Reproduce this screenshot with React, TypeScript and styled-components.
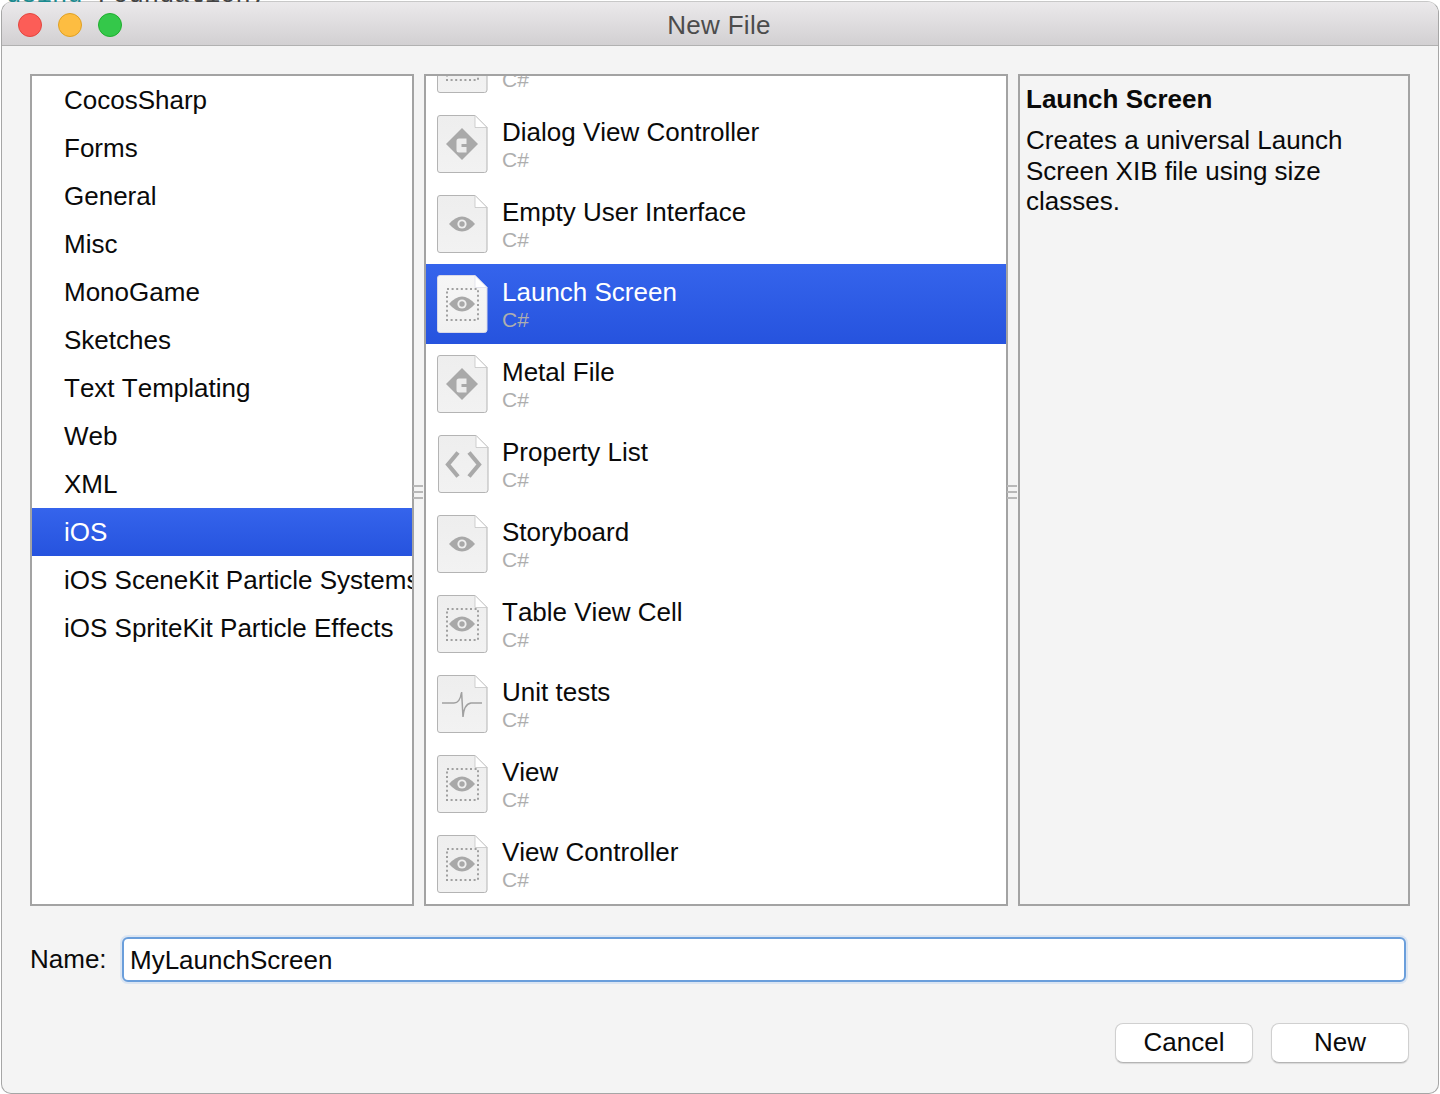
import * as React from 'react';
import styled, { createGlobalStyle } from 'styled-components';

const GlobalStyle = createGlobalStyle`
  html, body {
    margin: 0;
    padding: 0;
    background: #ffffff;
  }
  body {
    font-family: 'Liberation Sans', Arial, sans-serif;
    font-kerning: none;
    color: #0a0a0a;
  }
`;

const Page = styled.div`
  width: 1440px;
  height: 1094px;
  overflow: hidden;
  background: #ffffff;
`;

const BehindCode = styled.div`
  height: 2px;
  margin-bottom: -1px;
  padding-left: 6px;
  overflow: hidden;
  font-family: 'Liberation Mono', monospace;
  font-size: 25.5px;
  line-height: 2px;
  white-space: pre;
  color: #444444;

  & > div {
    margin-top: -5px;
  }

  & span {
    color: #1b8a8f;
  }
`;

const Window = styled.div`
  box-sizing: border-box;
  width: 1438px;
  height: 1093px;
  margin-left: 1px;
  display: flex;
  flex-direction: column;
  background: #f4f4f4;
  border: 1px solid #a6a6a6;
  border-top-color: #c8c8c8;
  border-radius: 12px 12px 10px 10px;
  overflow: hidden;
`;

const TitleBar = styled.div`
  box-sizing: border-box;
  height: 44px;
  flex: none;
  display: grid;
  grid-template-columns: 1fr auto 1fr;
  align-items: center;
  padding: 0 18px 0 16px;
  background: linear-gradient(#ebe9eb, #d2d0d2);
  border-bottom: 1px solid #b1b1b1;
`;

const Lights = styled.div`
  display: flex;
  gap: 16px;
`;

const Light = styled.span<{ $fill: string; $edge: string }>`
  box-sizing: border-box;
  width: 24px;
  height: 24px;
  border-radius: 50%;
  background: ${props => props.$fill};
  border: 1px solid ${props => props.$edge};
`;

const Title = styled.div`
  line-height: 46px;
  font-size: 26px;
  letter-spacing: 0.3px;
  color: #4c4c4c;
`;

const Body = styled.div`
  flex: 1;
  display: flex;
  flex-direction: column;
  padding: 28px 28px 29px;
`;

const Panes = styled.div`
  height: 832px;
  display: flex;
`;

const Pane = styled.div<{ $width: number; $bg?: string }>`
  box-sizing: border-box;
  width: ${props => props.$width}px;
  height: 100%;
  flex: none;
  border: 2px solid #a3a3a3;
  background: ${props => props.$bg || '#ffffff'};
  overflow: hidden;
`;

const Splitter = styled.div`
  width: 10px;
  flex: none;
  display: flex;
  flex-direction: column;
  justify-content: center;
  gap: 4px;
  margin-left: -1px;
  margin-right: 1px;
  padding-top: 4px;
  & > i {
    display: block;
    height: 2px;
    background: #b8b8b8;
  }
`;

const CategoryRow = styled.div<{ $selected?: boolean }>`
  height: 48px;
  line-height: 49px;
  padding-left: 32px;
  font-size: 26px;
  white-space: nowrap;
  overflow: hidden;
  color: ${props => (props.$selected ? '#ffffff' : '#0a0a0a')};
  background: ${props => (props.$selected ? 'linear-gradient(#3564ec, #2653de)' : 'transparent')};
`;

const TemplateList = styled.div`
  margin-top: -52px;
`;

const TemplateRow = styled.div<{ $selected?: boolean }>`
  height: 80px;
  display: flex;
  padding: 11px 0 0 11px;
  box-sizing: border-box;
  background: ${props => (props.$selected ? 'linear-gradient(#3564ec, #2653de)' : 'transparent')};
`;

const TemplateText = styled.div`
  margin-left: 13px;
`;

const TemplateName = styled.div<{ $selected?: boolean }>`
  height: 32px;
  margin-top: 1px;
  line-height: 32px;
  font-size: 26px;
  white-space: nowrap;
  color: ${props => (props.$selected ? '#ffffff' : '#0a0a0a')};
`;

const TemplateLang = styled.div`
  height: 24px;
  line-height: 24px;
  font-size: 21px;
  color: #aeaeae;
`;

const DocSvg = styled.svg<{ $shift?: boolean }>`
  display: block;
  flex: none;
  margin-left: ${props => (props.$shift ? 1 : 0)}px;
  margin-right: ${props => (props.$shift ? -1 : 0)}px;
`;

const Info = styled.div`
  padding: 7px 6px;
`;

const InfoTitle = styled.div`
  font-size: 26px;
  font-weight: 700;
  line-height: 32px;
  margin-bottom: 10px;
`;

const InfoText = styled.div`
  font-size: 26px;
  line-height: 30.5px;
`;

const NameRow = styled.div`
  display: flex;
  align-items: center;
  margin-top: 30px;
  height: 46px;
`;

const NameLabel = styled.label`
  width: 92px;
  flex: none;
  font-size: 26px;
  line-height: 48px;
`;

const NameInput = styled.div`
  box-sizing: border-box;
  width: 1284px;
  height: 45px;
  padding-left: 6px;
  border: 2px solid #6a9edb;
  border-radius: 6px;
  background: #ffffff;
  box-shadow: 0 0 0 2px #dbe5f2;
  font-size: 26px;
  line-height: 42px;
`;

const Footer = styled.div`
  display: flex;
  justify-content: flex-end;
  gap: 18px;
  margin: 41px 1px 0 0;
`;

const Button = styled.button`
  box-sizing: border-box;
  width: 138px;
  height: 40px;
  padding: 0 0 2px;
  background: #ffffff;
  border: 1px solid #d0d0d0;
  border-bottom-color: #b4b4b4;
  border-radius: 8px;
  box-shadow: 0 1px 1px rgba(0, 0, 0, 0.12);
  font-family: inherit;
  font-kerning: none;
  font-size: 26px;
  line-height: 36px;
  color: #0a0a0a;
`;

const Eye = () => (
  <g>
    <path d="M12 29 Q25 14 38 29 Q25 44 12 29 Z" fill="#a8a8a8" />
    <circle cx="25" cy="29" r="4.6" fill="#efefef" />
    <circle cx="25" cy="29" r="2.7" fill="#a8a8a8" />
  </g>
);

type Glyph = 'code' | 'eye' | 'frame' | 'xml' | 'pulse';

const DocIcon = ({ glyph, selected }: { glyph: Glyph; selected?: boolean }) => (
  <DocSvg width="52" height="60" viewBox="0 0 52 60" $shift={glyph === 'xml'}>
    <defs>
      <linearGradient id={selected ? 'pageOn' : 'pageOff'} x1="0" y1="0" x2="0" y2="1">
        <stop offset="0" stopColor={selected ? '#f6f6f6' : '#eeeeee'} />
        <stop offset="1" stopColor={selected ? '#f1f1f1' : '#f2f2f2'} />
      </linearGradient>
    </defs>
    <path
      d="M3 0.5 H38 L50 12.5 V55 Q50 57.5 47.5 57.5 H3 Q0.5 57.5 0.5 55 V3 Q0.5 0.5 3 0.5 Z"
      fill={`url(#${selected ? 'pageOn' : 'pageOff'})`}
      stroke={selected ? '#d8d8e8' : '#b4b4b4'}
    />
    <path d="M38 0.5 V12.5 H50 Z" fill="#ffffff" stroke={selected ? '#e0e0ea' : '#c4c4c4'} strokeWidth="0.8" />
    {glyph === 'code' && (
      <g>
        <path d="M25 13 L41 29 L25 45 L9 29 Z" fill="#a9a9a9" />
        <path
          d="M22 23.5 H29.5 V29 H24.5 V32 H29.5 V37.5 H22 Q19.5 37.5 19.5 35 V26 Q19.5 23.5 22 23.5 Z"
          fill="#ececec"
        />
      </g>
    )}
    {glyph === 'eye' && <Eye />}
    {glyph === 'frame' && (
      <g>
        <rect x="10" y="14" width="31" height="31" fill="none" stroke="#a0a0a0" strokeWidth="2" strokeDasharray="2 2.6" />
        <Eye />
      </g>
    )}
    {glyph === 'xml' && (
      <g fill="none" stroke="#a9a9a9" strokeWidth="4.2">
        <path d="M20 17.5 L10 29.5 L20 41.5" />
        <path d="M31 17.5 L41 29.5 L31 41.5" />
      </g>
    )}
    {glyph === 'pulse' && (
      <path
        d="M5 28 H17 Q23 28 24.6 17 L26 42 Q27 29 34 28 H45"
        fill="none"
        stroke="#a0a0a0"
        strokeWidth="1.5"
      />
    )}
  </DocSvg>
);

const categories = [
  'CocosSharp',
  'Forms',
  'General',
  'Misc',
  'MonoGame',
  'Sketches',
  'Text Templating',
  'Web',
  'XML',
  'iOS',
  'iOS SceneKit Particle Systems',
  'iOS SpriteKit Particle Effects',
];

const templates: { name: string; glyph: Glyph }[] = [
  { name: '', glyph: 'frame' },
  { name: 'Dialog View Controller', glyph: 'code' },
  { name: 'Empty User Interface', glyph: 'eye' },
  { name: 'Launch Screen', glyph: 'frame' },
  { name: 'Metal File', glyph: 'code' },
  { name: 'Property List', glyph: 'xml' },
  { name: 'Storyboard', glyph: 'eye' },
  { name: 'Table View Cell', glyph: 'frame' },
  { name: 'Unit tests', glyph: 'pulse' },
  { name: 'View', glyph: 'frame' },
  { name: 'View Controller', glyph: 'frame' },
];

export default function App() {
  return (
    <Page>
      <GlobalStyle />
      <BehindCode>
        <div>
          <span>using</span> Foundation;
        </div>
      </BehindCode>
      <Window>
        <TitleBar>
          <Lights>
            <Light $fill="#fc5d57" $edge="#e2463f" />
            <Light $fill="#fdbd41" $edge="#dfa023" />
            <Light $fill="#34c84a" $edge="#1fae2e" />
          </Lights>
          <Title>New File</Title>
        </TitleBar>
        <Body>
          <Panes>
            <Pane $width={384}>
              {categories.map(name => (
                <CategoryRow key={name} $selected={name === 'iOS'}>
                  {name}
                </CategoryRow>
              ))}
            </Pane>
            <Splitter>
              <i />
              <i />
              <i />
            </Splitter>
            <Pane $width={584}>
              <TemplateList>
                {templates.map((t, i) => {
                  const selected = t.name === 'Launch Screen';
                  return (
                    <TemplateRow key={i} $selected={selected}>
                      <DocIcon glyph={t.glyph} selected={selected} />
                      <TemplateText>
                        <TemplateName $selected={selected}>{t.name}</TemplateName>
                        <TemplateLang>C#</TemplateLang>
                      </TemplateText>
                    </TemplateRow>
                  );
                })}
              </TemplateList>
            </Pane>
            <Splitter>
              <i />
              <i />
              <i />
            </Splitter>
            <Pane $width={392} $bg="#f4f4f4">
              <Info>
                <InfoTitle>Launch Screen</InfoTitle>
                <InfoText>
                  Creates a universal Launch
                  <br />
                  Screen XIB file using size
                  <br />
                  classes.
                </InfoText>
              </Info>
            </Pane>
          </Panes>
          <NameRow>
            <NameLabel>Name:</NameLabel>
            <NameInput>MyLaunchScreen</NameInput>
          </NameRow>
          <Footer>
            <Button>Cancel</Button>
            <Button>New</Button>
          </Footer>
        </Body>
      </Window>
    </Page>
  );
}
